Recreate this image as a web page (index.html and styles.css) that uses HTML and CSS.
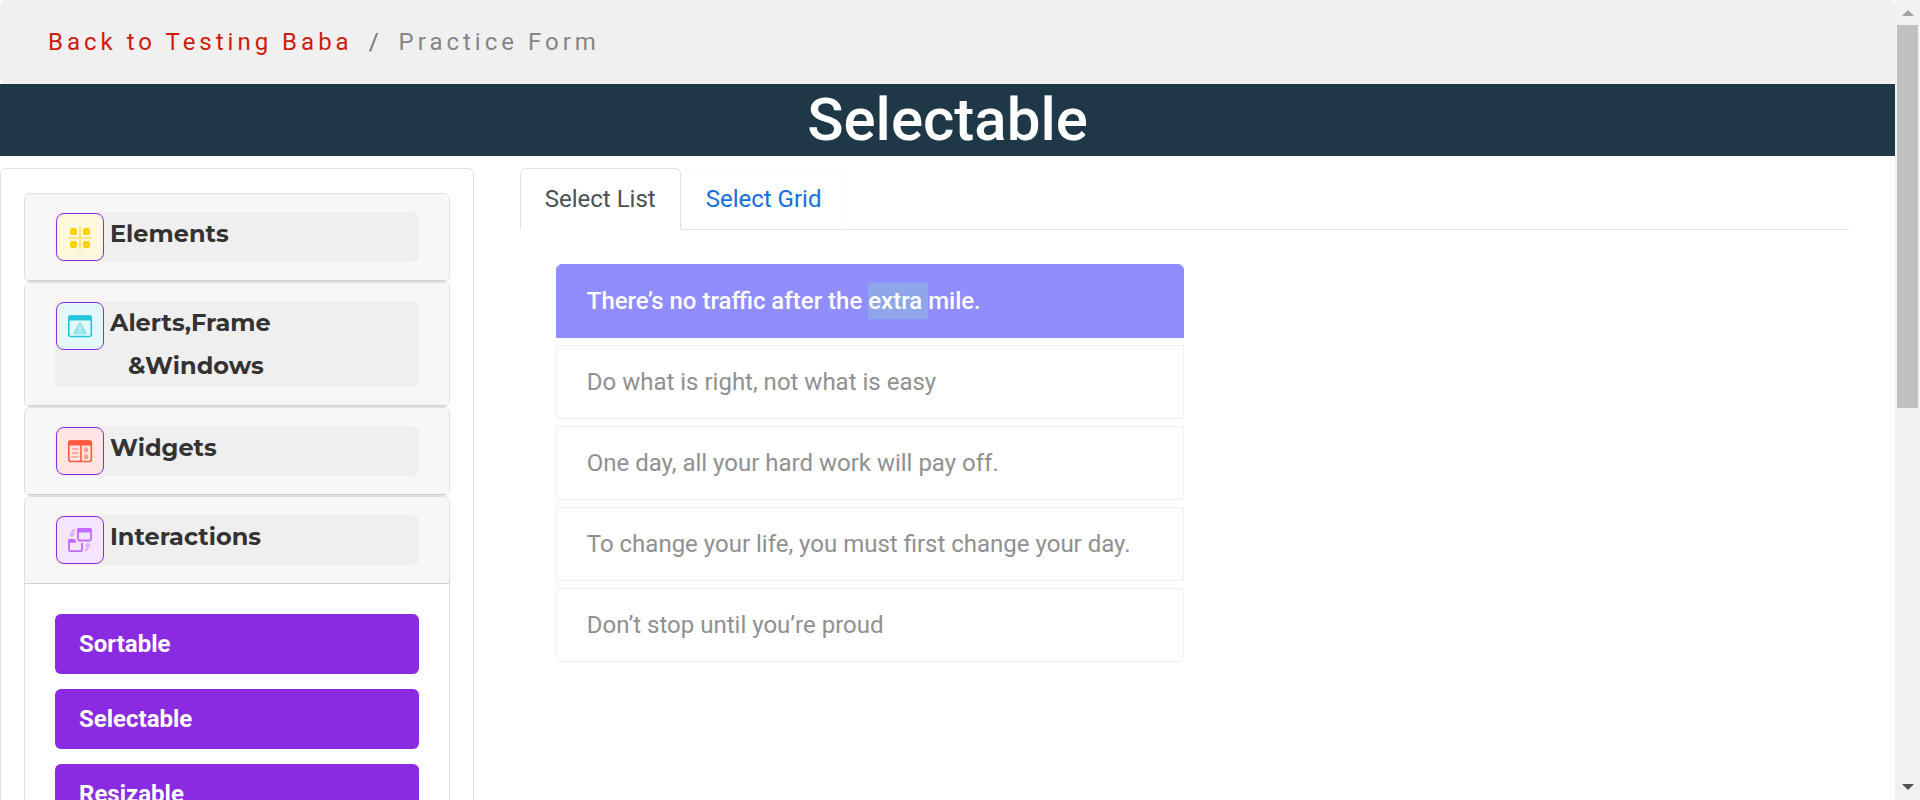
FILE: index.html
```html
<!DOCTYPE html>
<html lang="en">
<head>
<meta charset="utf-8">
<title>Selectable</title>
<link rel="stylesheet" href="styles.css">
</head>
<body>
<div class="page">
  <nav class="breadcrumb" aria-label="Breadcrumb">
    <a href="#">Back to Testing Baba</a>
    <span class="divider">/</span>
    <span class="current">Practice Form</span>
  </nav>
  <h1 class="title">Selectable</h1>
  <div class="columns">
    <aside class="sidebar">
      <section class="group">
        <div class="group-head">
          <button class="group-button" type="button">
            <svg class="icon icon-yellow" viewBox="1 1 46 46" aria-hidden="true">
              <g fill="#ffe680"><rect x="23" y="13" width="2" height="24" rx="1"/><rect x="12" y="24" width="24" height="2" rx="1"/></g>
              <g fill="#ffd200"><rect x="14" y="15" width="7" height="7" rx="2"/><rect x="27" y="15" width="7" height="7" rx="2"/><rect x="14" y="28" width="7" height="7" rx="2"/><rect x="27" y="28" width="7" height="7" rx="2"/></g>
            </svg>
            <span class="label">Elements</span>
          </button>
        </div>
      </section>
      <section class="group">
        <div class="group-head">
          <button class="group-button" type="button">
            <svg class="icon icon-cyan" viewBox="1 1 46 46" aria-hidden="true">
              <rect x="12.8" y="14" width="22.5" height="20.5" rx="2" fill="none" stroke="#26c6da" stroke-width="1.6"/>
              <path d="M12 18.5V15.5a2 2 0 0 1 2-2h20a2 2 0 0 1 2 2v3z" fill="#26c6da"/>
              <path d="M24 20.500c.6 0 1 .3 1.300.9l5.200 9c.5 1 0 1.800-1 1.800h-11c-1 0-1.500-.8-1-1.800l5.200-9c.3-.6.7-.9 1.300-.9z" fill="#93e3ec"/>
              <path d="M24 24.500v3.500M24 29.500v1.500" stroke="#e2f8fb" stroke-width="1.600"/>
            </svg>
            <span class="label">Alerts,Frame<span class="label-second">&amp;Windows</span></span>
          </button>
        </div>
      </section>
      <section class="group">
        <div class="group-head">
          <button class="group-button" type="button">
            <svg class="icon icon-red" viewBox="1 1 46 46" aria-hidden="true">
              <rect x="12.8" y="14" width="22.5" height="20.500" rx="2" fill="none" stroke="#ff5a3d" stroke-width="1.600"/>
              <path d="M12 18.500V15.500a2 2 0 0 1 2-2h20a2 2 0 0 1 2 2v3z" fill="#ff5a3d"/>
              <path d="M25 18v16.500" stroke="#ff5a3d" stroke-width="1.600"/>
              <path d="M16.500 22h5.500M16.500 26h5.500M16.500 30h5.500" stroke="#ff9c8a" stroke-width="1.600" stroke-linecap="round"/>
              <g fill="#ff9c8a"><rect x="28" y="20.500" width="4" height="4.500" rx="1"/><rect x="28" y="27.500" width="4" height="4.500" rx="1"/></g>
            </svg>
            <span class="label">Widgets</span>
          </button>
        </div>
      </section>
      <section class="group">
        <div class="group-head">
          <button class="group-button" type="button" aria-expanded="true">
            <svg class="icon icon-purple" viewBox="1 1 46 46" aria-hidden="true">
              <rect x="22" y="13" width="13" height="11.500" rx="1.500" fill="none" stroke="#c16cff" stroke-width="1.800"/>
              <path d="M21 16.500V14a2 2 0 0 1 2-2h11a2 2 0 0 1 2 2v2.500z" fill="#c16cff"/>
              <path d="M19 24h-5a1 1 0 0 0-1 1v9a1.200 1.200 0 0 0 1.200 1.200h10.600a1.200 1.200 0 0 0 1.200-1.200v-7" fill="none" stroke="#c16cff" stroke-width="1.800"/>
              <path d="M12 26.800V25a2 2 0 0 1 2-2h5l1.500 3.800z" fill="#c16cff"/>
              <path d="M18.500 14.200c-1.600 0-2.500.8-2.500 2.600v3M13.800 17.800l2.200 2.400 2.200-2.400M29.300 33.800c1.600 0 2.500-.8 2.500-2.600v-3M29.600 30.200l2.200-2.400 2.200 2.400" fill="none" stroke="#dda9ff" stroke-width="1.700" stroke-linecap="round"/>
            </svg>
            <span class="label">Interactions</span>
          </button>
        </div>
        <ul class="menu">
          <li><a href="#">Sortable</a></li>
          <li><a href="#">Selectable</a></li>
          <li><a href="#">Resizable</a></li>
        </ul>
      </section>
    </aside>
    <main class="content">
      <div class="tabs" role="tablist">
        <a class="tab active" href="#" role="tab" aria-selected="true">Select List</a>
        <a class="tab" href="#" role="tab" aria-selected="false">Select Grid</a>
      </div>
      <ul class="quotes">
        <li class="selected">There’s no traffic after the <mark>extra </mark>mile.</li>
        <li>Do what is right, not what is easy</li>
        <li>One day, all your hard work will pay off.</li>
        <li>To change your life, you must first change your day.</li>
        <li>Don’t stop until you’re proud</li>
      </ul>
    </main>
  </div>
</div>
<div class="scrollbar" aria-hidden="true">
  <span class="arrow arrow-up"></span>
  <span class="track"><span class="thumb"></span></span>
  <span class="arrow arrow-down"></span>
</div>
</body>
</html>
```
FILE: styles.css
```css
* {
  box-sizing: border-box;
}

body {
  margin: 0;
  height: 100vh;
  display: flex;
  overflow: hidden;
  background: #fff;
  color: #212529;
  font: 24px/36px Roboto, "Liberation Sans", sans-serif;
}

ul {
  list-style: none;
  margin: 0;
  padding: 0;
}

a {
  text-decoration: none;
}

.page {
  flex: 1;
  min-width: 0;
  overflow: hidden;
}

.breadcrumb {
  display: flex;
  gap: 16px;
  padding: 24px 48px;
  border-radius: 6px;
  background: #f0f0f0;
  letter-spacing: 4px;
}

.breadcrumb a {
  color: #cf1c0c;
}

.divider {
  color: #6c757d;
}

.current {
  color: #868686;
}

.title {
  margin: 0 0 12px;
  background: #1e3847;
  color: #fff;
  font-size: 60px;
  font-weight: 500;
  line-height: 72px;
  text-align: center;
}

.columns {
  display: flex;
}

.sidebar {
  width: 25%;
  padding: 24px 23px;
  border: 1px solid #dee2e6;
  border-radius: 6px;
}

.group {
  border: 1px solid #dfdfdf;
  border-radius: 6px;
  overflow: hidden;
}

.group-head {
  padding: 18px 30px;
  border-bottom: 1px solid #d0d0d0;
  background: #f7f7f7;
}

.group-button {
  display: flex;
  align-items: flex-start;
  gap: 6px;
  width: 100%;
  padding: 0 1px;
  border: 0;
  border-radius: 6px;
  background: #efefef;
  color: #333;
  font: 700 24px/43px Montserrat, Inter, "Open Sans", sans-serif;
  text-align: left;
}

.icon {
  flex: none;
  width: 48px;
  height: 48px;
  margin: 1px 0;
  border: 1px solid #8a2be2;
  border-radius: 8px;
}

.icon-yellow {
  background: #fff8dc;
}

.icon-cyan {
  background: #e2f8fb;
}

.icon-red {
  background: #ffe5e1;
}

.icon-purple {
  background: #f4e5fc;
}

.label-second {
  display: block;
  padding-left: 18px;
}

.menu {
  display: grid;
  gap: 15px;
  padding: 30px;
}

.menu a {
  display: block;
  padding: 12px 24px;
  border-radius: 6px;
  background: #8a2be2;
  color: #fff;
  font-weight: 700;
}

.content {
  flex: 1;
  padding: 0 46px;
}

.tabs {
  display: flex;
  border-bottom: 1px solid #dee2e6;
}

.tab {
  margin-bottom: -1px;
  padding: 12px 24px;
  border: 1px solid #f8f9fa;
  border-bottom-color: #dee2e6;
  border-radius: 6px 6px 0 0;
  color: #136fe0;
}

.tab.active {
  border-color: #dee2e6 #dee2e6 #fff;
  color: #495057;
}

.quotes {
  display: grid;
  gap: 7px;
  width: calc(50% - 36px);
  margin: 34px 36px;
  color: #909090;
}

.quotes li {
  padding: 18px 30px;
  border: 1px solid #f0f0f0;
}

.quotes li:first-child {
  border-radius: 6px 6px 0 0;
}

.quotes li:last-child {
  border-radius: 0 0 6px 6px;
}

.quotes .selected {
  border-color: #8f8dff;
  background: #8f8dff;
  color: #fff;
  font-weight: 500;
}

mark {
  padding: 4px 0;
  background: #8fa6e9;
  color: inherit;
}

.scrollbar {
  display: flex;
  flex-direction: column;
  align-items: center;
  width: 25px;
  padding: 10px 2px;
  background: #f1f1f1;
}

.arrow {
  border: 6px solid transparent;
}

.arrow-up {
  border-top: 0;
  border-bottom-color: #a3a3a3;
}

.arrow-down {
  border-bottom: 0;
  border-top-color: #505050;
}

.track {
  flex: 1;
  width: 100%;
  padding: 9px 0;
}

.thumb {
  display: block;
  height: 51%;
  background: #c1c1c1;
}
```
